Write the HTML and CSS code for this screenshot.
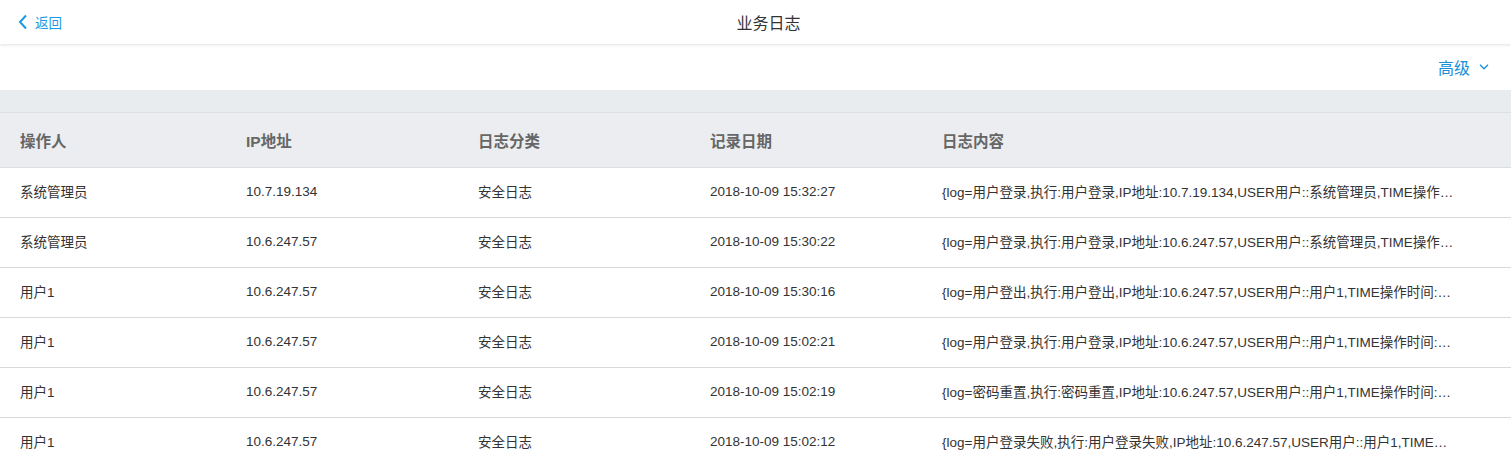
FILE: index.html
```html
<!DOCTYPE html>
<html lang="zh-CN">
<head>
<meta charset="utf-8">
<title>业务日志</title>
<link rel="stylesheet" href="styles.css">
</head>
<body>
<header class="topbar">
  <a class="back" href="#">
    <svg class="back-icon" width="10" height="16" viewBox="0 0 10 16"><path d="M8 1.5 L2 8 L8 14.5" fill="none" stroke="#1a9be6" stroke-width="2"/></svg>
    <span>返回</span>
  </a>
  <h1 class="title">业务日志</h1>
</header>
<div class="toolbar">
  <a class="advanced" href="#">高级
    <svg class="adv-icon" width="10" height="6" viewBox="0 0 10 6"><path d="M1 0.8 L5 4.8 L9 0.8" fill="none" stroke="#1a8fd8" stroke-width="1.3"/></svg>
  </a>
</div>
<div class="band"></div>
<div class="table">
  <div class="row head">
    <div class="cell">操作人</div>
    <div class="cell">IP地址</div>
    <div class="cell">日志分类</div>
    <div class="cell">记录日期</div>
    <div class="cell">日志内容</div>
  </div>
  <div class="row">
    <div class="cell">系统管理员</div>
    <div class="cell">10.7.19.134</div>
    <div class="cell">安全日志</div>
    <div class="cell">2018-10-09 15:32:27</div>
    <div class="cell content">{log=用户登录,执行:用户登录,IP地址:10.7.19.134,USER用户::系统管理员,TIME操作…</div>
  </div>
  <div class="row">
    <div class="cell">系统管理员</div>
    <div class="cell">10.6.247.57</div>
    <div class="cell">安全日志</div>
    <div class="cell">2018-10-09 15:30:22</div>
    <div class="cell content">{log=用户登录,执行:用户登录,IP地址:10.6.247.57,USER用户::系统管理员,TIME操作…</div>
  </div>
  <div class="row">
    <div class="cell">用户1</div>
    <div class="cell">10.6.247.57</div>
    <div class="cell">安全日志</div>
    <div class="cell">2018-10-09 15:30:16</div>
    <div class="cell content">{log=用户登出,执行:用户登出,IP地址:10.6.247.57,USER用户::用户1,TIME操作时间:…</div>
  </div>
  <div class="row">
    <div class="cell">用户1</div>
    <div class="cell">10.6.247.57</div>
    <div class="cell">安全日志</div>
    <div class="cell">2018-10-09 15:02:21</div>
    <div class="cell content">{log=用户登录,执行:用户登录,IP地址:10.6.247.57,USER用户::用户1,TIME操作时间:…</div>
  </div>
  <div class="row">
    <div class="cell">用户1</div>
    <div class="cell">10.6.247.57</div>
    <div class="cell">安全日志</div>
    <div class="cell">2018-10-09 15:02:19</div>
    <div class="cell content">{log=密码重置,执行:密码重置,IP地址:10.6.247.57,USER用户::用户1,TIME操作时间:…</div>
  </div>
  <div class="row">
    <div class="cell">用户1</div>
    <div class="cell">10.6.247.57</div>
    <div class="cell">安全日志</div>
    <div class="cell">2018-10-09 15:02:12</div>
    <div class="cell content">{log=用户登录失败,执行:用户登录失败,IP地址:10.6.247.57,USER用户::用户1,TIME…</div>
  </div>
</div>
</body>
</html>
```

FILE: styles.css
```css
* { box-sizing: border-box; }
html, body {
  margin: 0;
  padding: 0;
  background: #fff;
  font-family: "Liberation Sans", Arial, "Noto Sans CJK SC", sans-serif;
  color: #333;
  overflow: hidden;
}
.topbar {
  position: relative;
  height: 44px;
  display: flex;
  align-items: center;
  justify-content: center;
  padding-left: 26px;
  background: #fff;
  box-shadow: 0 1px 3px rgba(0,0,0,0.12);
  z-index: 2;
}
.back {
  position: absolute;
  left: 18px;
  top: 0;
  height: 44px;
  display: flex;
  align-items: center;
  gap: 7px;
  color: #1a9be6;
  text-decoration: none;
  font-size: 13.5px;
}
.back-icon { display: block; }
.title {
  margin: 0;
  font-size: 16px;
  font-weight: normal;
  color: #333;
}
.toolbar {
  height: 46px;
  display: flex;
  align-items: center;
  justify-content: flex-end;
  padding-right: 22px;
  background: #fff;
}
.advanced {
  display: flex;
  align-items: center;
  gap: 9px;
  color: #1a8fd8;
  text-decoration: none;
  font-size: 16px;
}
.band {
  height: 23px;
  background: #e9ecef;
  border-bottom: 1px solid #dcdfe3;
}
.row {
  display: grid;
  grid-template-columns: 246px 232px 232px 232px 1fr;
  height: 50px;
  padding-bottom: 3px;
  align-items: center;
  border-bottom: 1px solid #d9d9d9;
  font-size: 13.5px;
  color: #333;
}
.row.head {
  height: 55px;
  padding-bottom: 0;
  background: #ebedf0;
  font-size: 15.5px;
  font-weight: bold;
  color: #666;
  border-bottom: 1px solid #dadde1;
}
.cell {
  white-space: nowrap;
  overflow: hidden;
  text-overflow: ellipsis;
}
.cell:first-child { padding-left: 20px; }
.cell.content { padding-right: 20px; }
```
